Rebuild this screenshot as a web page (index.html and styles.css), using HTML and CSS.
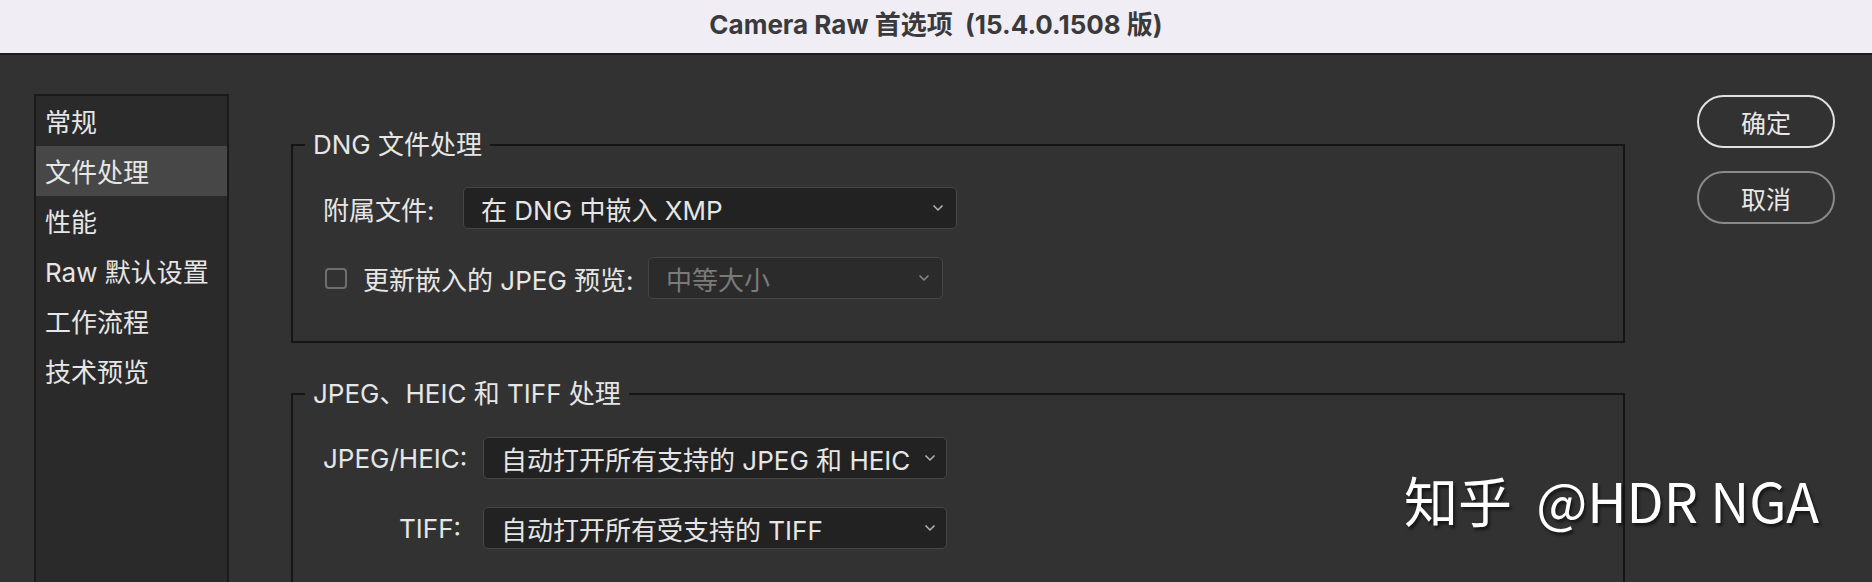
FILE: index.html
```html
<!DOCTYPE html>
<html lang="zh-CN">
<head>
<meta charset="utf-8">
<title>Camera Raw 首选项</title>
<link rel="stylesheet" href="styles.css">
</head>
<body>
<div class="window">
  <header class="titlebar">Camera Raw 首选项&nbsp; (15.4.0.1508 版)</header>
  <div class="main">
    <nav class="sidebar">
      <div class="nav-item">常规</div>
      <div class="nav-item active">文件处理</div>
      <div class="nav-item">性能</div>
      <div class="nav-item">Raw 默认设置</div>
      <div class="nav-item">工作流程</div>
      <div class="nav-item">技术预览</div>
    </nav>
    <div class="content">
      <fieldset class="group group-dng">
        <legend>DNG 文件处理</legend>
        <div class="row">
          <span class="label label-side">附属文件:</span>
          <div class="select select-wide">
            <span>在 DNG 中嵌入 XMP</span>
            <svg class="chev" width="12" height="8" viewBox="0 0 12 8"><polyline points="1.5,1.5 6,6 10.5,1.5" fill="none" stroke="#b5b5b5" stroke-width="1.5"/></svg>
          </div>
        </div>
        <div class="row">
          <span class="checkbox"></span>
          <span class="label label-check">更新嵌入的 JPEG 预览:</span>
          <div class="select select-small disabled">
            <span>中等大小</span>
            <svg class="chev" width="12" height="8" viewBox="0 0 12 8"><polyline points="1.5,1.5 6,6 10.5,1.5" fill="none" stroke="#8a8a8a" stroke-width="1.5"/></svg>
          </div>
        </div>
      </fieldset>
      <fieldset class="group group-jpeg">
        <legend>JPEG、HEIC 和 TIFF 处理</legend>
        <div class="row">
          <span class="label label-right">JPEG/HEIC:</span>
          <div class="select select-mid">
            <span>自动打开所有支持的 JPEG 和 HEIC</span>
            <svg class="chev" width="12" height="8" viewBox="0 0 12 8"><polyline points="1.5,1.5 6,6 10.5,1.5" fill="none" stroke="#b5b5b5" stroke-width="1.5"/></svg>
          </div>
        </div>
        <div class="row">
          <span class="label label-right">TIFF:</span>
          <div class="select select-mid">
            <span>自动打开所有受支持的 TIFF</span>
            <svg class="chev" width="12" height="8" viewBox="0 0 12 8"><polyline points="1.5,1.5 6,6 10.5,1.5" fill="none" stroke="#b5b5b5" stroke-width="1.5"/></svg>
          </div>
        </div>
      </fieldset>
    </div>
    <div class="buttons">
      <button class="btn btn-primary">确定</button>
      <button class="btn btn-secondary">取消</button>
    </div>
  </div>
  <div class="watermark">知乎&nbsp; @HDR NGA</div>
</div>
</body>
</html>
```
FILE: styles.css
```css
* { box-sizing: border-box; }
html, body {
  margin: 0;
  padding: 0;
  width: 1872px;
  height: 582px;
  overflow: hidden;
  background: #323232;
}
body {
  font-family: Inter, "Noto Sans CJK SC", sans-serif;
  color: #e4e4e4;
}
.window {
  position: relative;
  width: 1872px;
  height: 582px;
  overflow: hidden;
  display: flex;
  flex-direction: column;
}
.titlebar {
  height: 55px;
  flex: 0 0 55px;
  background: #f0eef4;
  border-bottom: 2px solid #1c1c1c;
  color: #3a3a3c;
  font-weight: 700;
  font-size: 26px;
  text-align: center;
  line-height: 50px;
}
.main {
  flex: 1;
  display: flex;
  align-items: flex-start;
  min-height: 0;
}
.sidebar {
  margin-left: 34px;
  margin-top: 39px;
  width: 195px;
  height: 600px;
  background: #2a2a2a;
  border: 2px solid #1a1a1a;
  border-bottom: none;
  display: flex;
  flex-direction: column;
}
.nav-item {
  height: 50px;
  line-height: 50px;
  padding-top: 2px;
  padding-left: 9px;
  font-size: 26px;
  color: #e6e6e6;
  white-space: nowrap;
}
.nav-item.active {
  background: #474747;
}
.content {
  margin-left: 62px;
  width: 1334px;
  padding-top: 75px;
  display: flex;
  flex-direction: column;
  gap: 36px;
}
.group {
  margin: 0;
  border: 2px solid #151515;
  padding: 27px 12px 42px 12px;
  min-width: 0;
  display: flex;
  flex-direction: column;
  gap: 28px;
}
.group-jpeg {
  padding-top: 28px;
  height: 400px;
}
legend {
  padding: 0 8px;
  font-size: 26px;
  line-height: 30px;
  color: #e6e6e6;
  white-space: nowrap;
}
.row {
  display: flex;
  align-items: center;
  height: 42px;
  padding-left: 18px;
}
.label {
  font-size: 26px;
  color: #e6e6e6;
  white-space: nowrap;
}
.label-side { width: 140px; }
.label-check { width: 285px; }
.label-right {
  width: 138px;
  text-align: right;
  margin-right: 22px;
}
.checkbox {
  width: 22px;
  height: 21px;
  border: 2px solid #6e6e6e;
  border-radius: 4px;
  margin-left: 2px;
  margin-right: 16px;
}
.select {
  height: 42px;
  background: #222222;
  border: 1px solid #474747;
  border-radius: 5px;
  display: flex;
  align-items: center;
  justify-content: space-between;
  padding: 0 12px 0 17px;
  font-size: 26px;
  color: #e6e6e6;
  white-space: nowrap;
}
.select-wide { width: 494px; }
.select-small { width: 295px; }
.select-mid { width: 464px; padding-right: 10px; }
.select.disabled {
  background: #2b2b2b;
  color: #7a7a7a;
  border-color: #454545;
}
.chev { flex: 0 0 auto; }
.buttons {
  margin-left: 72px;
  margin-top: 40px;
  display: flex;
  flex-direction: column;
  gap: 23px;
}
.btn {
  width: 138px;
  height: 53px;
  border-radius: 27px;
  background: transparent;
  font-family: Inter, "Noto Sans CJK SC", sans-serif;
  font-size: 25px;
  color: #e8e8e8;
  padding: 0;
  cursor: pointer;
}
.btn-primary { border: 2px solid #e2e2e2; }
.btn-secondary { border: 2px solid #8a8a8a; }
.watermark {
  position: absolute;
  left: 1404px;
  top: 465px;
  font-family: "Noto Sans CJK SC", sans-serif;
  font-size: 54px;
  line-height: 70px;
  color: #ffffff;
  text-shadow: 2px 3px 3px rgba(0, 0, 0, 0.55);
  white-space: nowrap;
}
```
